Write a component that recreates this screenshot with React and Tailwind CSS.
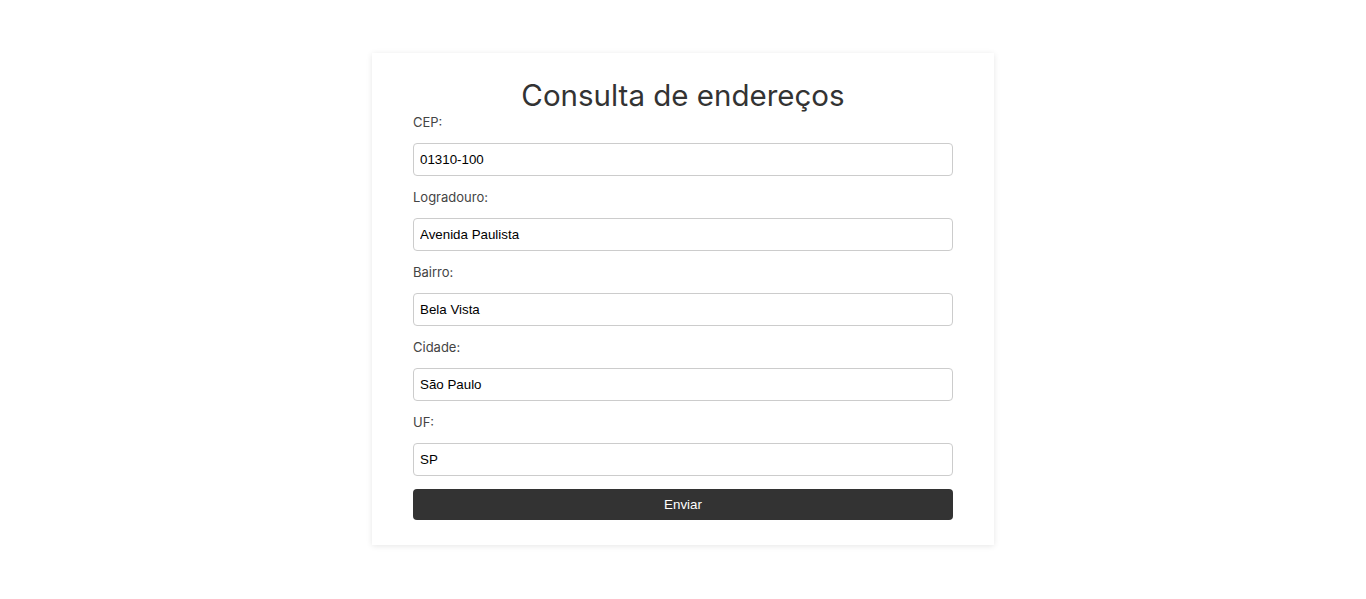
import React, { useState } from 'react'

const fields = [
  { name: 'cep', label: 'CEP:', value: '01310-100' },
  { name: 'logradouro', label: 'Logradouro:', value: 'Avenida Paulista' },
  { name: 'bairro', label: 'Bairro:', value: 'Bela Vista' },
  { name: 'cidade', label: 'Cidade:', value: 'São Paulo' },
  { name: 'uf', label: 'UF:', value: 'SP' },
]

export default function App() {
  const [form, setForm] = useState(
    Object.fromEntries(fields.map(f => [f.name, f.value]))
  )

  return (
    <div className="min-h-screen bg-white pt-[53px] font-['Inter',sans-serif]">
      <div className="mx-auto w-[622px] bg-white px-[41px] pt-[24px] pb-[25px] shadow-[0_1px_6px_rgba(0,0,0,0.1)]">
        <h1 className="text-center text-[29.5px] leading-[37px] text-[#333]">Consulta de endereços</h1>
        <form onSubmit={e => e.preventDefault()}>
          {fields.map(f => (
            <div key={f.name}>
              <label htmlFor={f.name} className="block text-[13px] leading-4 text-[#444] mb-[13px]">
                {f.label}
              </label>
              <input
                id={f.name}
                value={form[f.name]}
                onChange={e => setForm(p => ({ ...p, [f.name]: e.target.value }))}
                className="block w-full h-[33px] mb-[13px] rounded border border-[#ccc] px-[6px] text-[13.33px] text-black font-['Liberation_Sans',Arial,sans-serif] outline-none"
              />
            </div>
          ))}
          <button
            type="submit"
            className="block w-full h-[31px] mt-px rounded bg-[#333] text-white text-[13.33px] font-['Liberation_Sans',Arial,sans-serif]"
          >
            Enviar
          </button>
        </form>
      </div>
    </div>
  )
}
